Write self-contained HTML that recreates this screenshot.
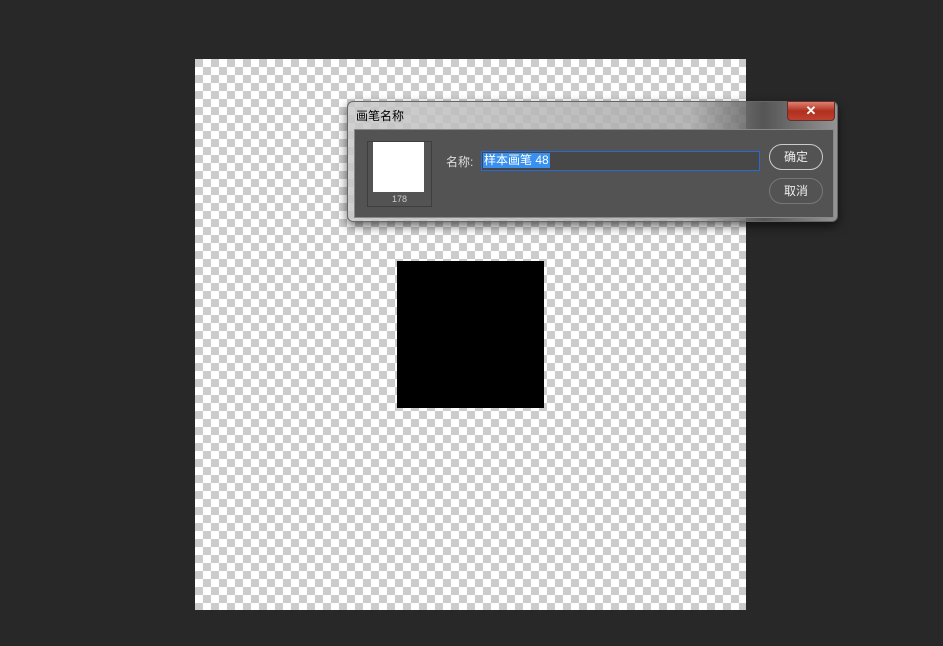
<!DOCTYPE html>
<html><head><style>
body{margin:0;width:943px;height:646px;background:#282828;position:relative;overflow:hidden;font-family:"Liberation Sans","Noto Sans CJK SC",sans-serif}
.cv{position:absolute;left:195px;top:59px;width:551px;height:551px;background-color:#fff;background-image:linear-gradient(45deg,#ccc 25%,transparent 25%,transparent 75%,#ccc 75%),linear-gradient(45deg,#ccc 25%,transparent 25%,transparent 75%,#ccc 75%);background-size:16px 16px;background-position:8px 0,0 8px}
.sq{position:absolute;left:397px;top:261px;width:147px;height:147px;background:#000}
.dlg{position:absolute;left:347px;top:101px;width:489px;height:119px;border:1px solid #666;border-radius:6px;background:linear-gradient(90deg,rgba(200,200,200,.85),rgba(170,170,170,.85) 70%,rgba(90,90,90,.9) 85%,rgba(160,160,160,.9));box-shadow:0 4px 10px rgba(0,0,0,.6)}
.t{position:absolute;left:8px;top:5px;font-size:12px;color:#000}
.x{position:absolute;left:439px;top:-1px;width:46px;height:18px;background:linear-gradient(#e08070,#b03020 50%,#c04030);border:1px solid #603030;border-radius:0 0 4px 4px;color:#fff;font-weight:bold;text-align:center;font-size:13px;line-height:17px}
.in{position:absolute;left:6px;top:27px;width:478px;height:87px;background:#535353;border:1px solid #888}
.pv{position:absolute;left:12px;top:11px;width:63px;height:64px;border:1px solid #3e3e3e}
.pv div{position:absolute;left:5px;top:0;width:51px;height:50px;background:#fff}
.pv span{position:absolute;left:0;right:0;top:52px;text-align:center;font-size:9px;color:#ccc}
.lb{position:absolute;left:91px;top:23px;color:#ddd;font-size:12px}
.ip{position:absolute;left:126px;top:21px;width:277px;height:18px;border:1px solid #2a6ad0;background:#474747}
.ip span{position:absolute;left:1px;top:1px;background:#3890f0;color:#fff;font-size:12px;line-height:15px;padding:0 1px}
.b{position:absolute;left:414px;width:52px;height:24px;border:1px solid #ccc;border-radius:13px;color:#eee;font-size:12px;text-align:center;line-height:24px}
</style></head><body>
<div class="cv"></div><div class="sq"></div>
<div class="dlg"><div class="t">画笔名称</div><div class="x">✕</div>
<div class="in"><div class="pv"><div></div><span>178</span></div>
<div class="lb">名称:</div><div class="ip"><span>样本画笔 48</span></div>
<div class="b" style="top:14px">确定</div><div class="b" style="top:48px;border-color:#777">取消</div>
</div></div>
</body></html>
